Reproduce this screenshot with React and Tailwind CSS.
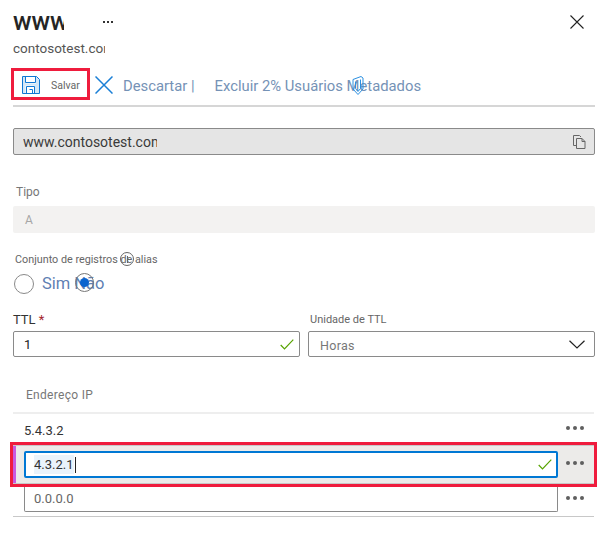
import React from 'react';

const SaveIcon = () => (
  <svg width="18" height="18" viewBox="0 0 18 18" fill="none" stroke="#0f78d4" strokeWidth="1" className="shrink-0">
    <path d="M1 1h2.500v6.500h10.500v-6.500h0.500l3 3v13h-5v-7.500h-9v7.500h-3.500z" fill="#9cc9ee" fillOpacity="0.45" stroke="none" />
    <path d="M0.500 0.500h14l3 3v14h-17z" />
    <path d="M3.500 0.500v6h10v-6" />
    <path d="M4.500 17.500v-7h8v7" />
    <path d="M7.500 13.500h3v4" />
  </svg>
);

const DiscardIcon = () => (
  <svg width="18" height="18" viewBox="0 0 18 18" fill="none" stroke="#1a7fd6" strokeWidth="1.5" className="shrink-0">
    <path d="M0.500 0.500l17 17M17.500 0.500l-17 17" />
  </svg>
);

const CloseIcon = () => (
  <svg width="14" height="14" viewBox="0 0 14 14" fill="none" stroke="#222" strokeWidth="1.1">
    <path d="M0.500 0.500l13 13M13.500 0.500l-13 13" />
  </svg>
);

const ShieldIcon = () => (
  <svg width="12" height="19" viewBox="0 0 12 19" fill="none" stroke="#2b8fe0" strokeWidth="1">
    <path d="M1 3.500L9 0.500l2 1.500v11l-5 5.500-5-5.500z" />
    <path d="M3.500 5.500v7l2.500 3 2.500-3v-9" />
  </svg>
);

const CopyIcon = () => (
  <svg width="13" height="14" viewBox="0 0 13 14" fill="none" stroke="#666" strokeWidth="1">
    <path d="M3.500 10.500h-3v-10h6l1.500 1.500" />
    <path d="M3.500 3.500h5.500l3 3v7h-8.500z" />
    <path d="M9 3.500v3h3" />
  </svg>
);

const Check = () => (
  <svg width="14" height="11" viewBox="0 0 14 11" fill="none" stroke="#57a300" strokeWidth="1.200">
    <path d="M0.700 6l3.800 4L13.300 0.700" />
  </svg>
);

const Chevron = () => (
  <svg width="16" height="9" viewBox="0 0 16 9" fill="none" stroke="#222" strokeWidth="1.200">
    <path d="M0.500 0.700L8 8l7.500-7.300" />
  </svg>
);

const Dots = ({ className = '' }) => (
  <div className={`flex w-[33px] shrink-0 justify-center gap-[3px] ${className}`}>
    <span className="h-[4px] w-[4px] rounded-full bg-[#5f5f5f]"></span>
    <span className="h-[4px] w-[4px] rounded-full bg-[#5f5f5f]"></span>
    <span className="h-[4px] w-[4px] rounded-full bg-[#5f5f5f]"></span>
  </div>
);

export default function App() {
  return (
    <div className="h-[541px] w-[602px] overflow-hidden bg-white font-['Roboto','Liberation_Sans',sans-serif]">
      {/* header */}
      <div className="flex h-[37px] items-end justify-between pl-[13px] pr-[18px]">
        <div className="flex items-center">
          <div className="w-[51px] overflow-hidden text-[25px] font-medium leading-[30px] text-[#252525]">www</div>
          <div className="ml-[39px] flex gap-[2px]">
            <span className="h-[2px] w-[2px] bg-[#333]"></span>
            <span className="h-[2px] w-[2px] bg-[#333]"></span>
            <span className="h-[2px] w-[2px] bg-[#333]"></span>
          </div>
        </div>
        <div className="pb-[8px]"><CloseIcon /></div>
      </div>
      <div className="ml-[13px] mt-[1px] w-[92px] overflow-hidden whitespace-nowrap text-[13.500px] leading-[20px] text-[#555]">contosotest.com</div>

      {/* toolbar */}
      <div className="ml-[11px] mt-[10px] flex items-center">
        <div className="flex h-[32px] w-[79px] items-center border-3 border-[#ef1c3d] pl-[8px]">
          <div className="pt-[2px]"><SaveIcon /></div>
          <span className="ml-[11px] pt-[4px] text-[10.500px] text-[#666]">Salvar</span>
        </div>
        <div className="ml-[5px] pt-[2px]"><DiscardIcon /></div>
        <span className="ml-[10px] whitespace-nowrap pt-[4px] text-[14.800px] text-[#7592b6]">Descartar |</span>
        <div className="relative ml-[20px] whitespace-nowrap pt-[4px] text-[14.800px] text-[#7592b6]">
          Excluir 2% Usuários Metadados
          <div className="absolute left-[137px] top-[5px]"><ShieldIcon /></div>
        </div>
      </div>
      <div className="ml-[13px] mt-[5px] h-[2px] w-[582px] bg-[#d6d6d6]"></div>

      {/* name */}
      <div className="ml-[13px] mt-[21px] flex h-[27px] w-[582px] items-center justify-between rounded-[2px] border border-[#8a8a8a] bg-[#e5e5e5] pl-[9px] pr-[8px]">
        <div className="w-[134px] overflow-hidden whitespace-nowrap pt-[2px] text-[14px] text-[#3a3a3a]">www.contosotest.com</div>
        <CopyIcon />
      </div>

      {/* tipo */}
      <div className="ml-[16px] mt-[28px] text-[12px] leading-[18px] text-[#777]">Tipo</div>
      <div className="ml-[13px] mt-[5px] flex h-[27px] w-[582px] items-center rounded-[2px] bg-[#f3f2f1] pl-[12px] text-[12px] text-[#a6a6a6]">A</div>

      {/* alias */}
      <div className="relative ml-[15px] mt-[18px] whitespace-nowrap text-[10.800px] leading-[18px] text-[#666]">
        Conjunto de registros de alias
        <span className="absolute left-[105px] top-[1px] flex h-[14px] w-[14px] items-center justify-center rounded-full border border-[#666]">
          <span className="h-[7px] w-[1px] bg-[#666]"></span>
        </span>
      </div>
      <div className="relative ml-[14px] mt-[4px] flex h-[21px] items-center">
        <span className="h-[20px] w-[20px] rounded-full border border-[#8a8a8a]"></span>
        <span className="ml-[8px] text-[16.500px] leading-[20px] text-[#5f7fb3]">Sim</span>
        <span className="ml-[4px] text-[16.500px] leading-[20px] text-[#5f7fb3]">Não</span>
        <span className="absolute left-[61px] top-0 flex h-[19px] w-[19px] items-center justify-center rounded-full border border-[#777]">
          <span className="h-[9px] w-[9px] rounded-full bg-[#0b63ce]"></span>
        </span>
      </div>

      {/* ttl */}
      <div className="ml-[13px] mt-[14px] flex gap-[8px]">
        <div className="w-[287px]">
          <div className="pt-[2px] text-[13px] leading-[20px] text-[#333]">TTL <span className="text-[#a4262c]">*</span></div>
          <div className="mt-[1px] flex h-[26px] items-center justify-between rounded-[2px] border border-[#8a8a8a] pl-[10px] pr-[5px] pt-[1px] text-[13px] text-[#222]">
            1
            <Check />
          </div>
        </div>
        <div className="w-[287px]">
          <div className="pl-[2px] pt-[2px] text-[11px] leading-[19px] text-[#666]">Unidade de TTL</div>
          <div className="mt-[2px] flex h-[26px] items-center justify-between rounded-[2px] border border-[#8a8a8a] pl-[11px] pr-[9px] text-[12.500px] tracking-[0.3px] text-[#777]">
            <span className="pt-[4px]">Horas</span>
            <Chevron />
          </div>
        </div>
      </div>

      {/* ip list */}
      <div className="ml-[26px] mt-[29px] text-[12px] leading-[18px] tracking-[0.3px] text-[#777]">Endereço IP</div>
      <div className="ml-[13px] mt-[8px] h-[2px] w-[581px] bg-[#eeeeee]"></div>
      <div className="ml-[13px] flex h-[28px] w-[581px] items-center">
        <div className="w-[545px] pl-[11px] pt-[6px] text-[13px] text-[#333]">5.4.3.2</div>
        <Dots />
      </div>

      <div className="ml-[10px] h-[45px] w-[587px] border-3 border-[#ef1c3d]">
        <div className="flex h-[39px] items-center border-y border-[#c8c8c8] bg-[#ecebe9]">
          <div className="h-full w-[3px] bg-[#c95ae0]"></div>
          <div className="ml-[8px] flex h-[27px] w-[534px] items-center justify-between rounded-[2px] border-2 border-[#0078d4] bg-white pl-[8px] pr-[4px]">
            <span className="flex items-center text-[13px] text-[#333]">
              <span className="bg-[#eaf3fb]">4.3.2.1</span>
              <span className="ml-[1px] h-[16px] w-[1px] bg-[#222]"></span>
            </span>
            <Check />
          </div>
          <Dots className="mb-[4px]" />
        </div>
      </div>

      <div className="ml-[13px] flex h-[25px] w-[581px] items-center">
        <div className="ml-[11px] flex h-[25px] w-[534px] items-center rounded-b-[2px] border-x border-b border-[#8a8a8a] pl-[9px] text-[13px] text-[#666]">0.0.0.0</div>
        <Dots className="mb-[3px]" />
      </div>
      <div className="ml-[13px] mt-[4px] h-[1px] w-[581px] bg-[#c8c8c8]"></div>
    </div>
  );
}
